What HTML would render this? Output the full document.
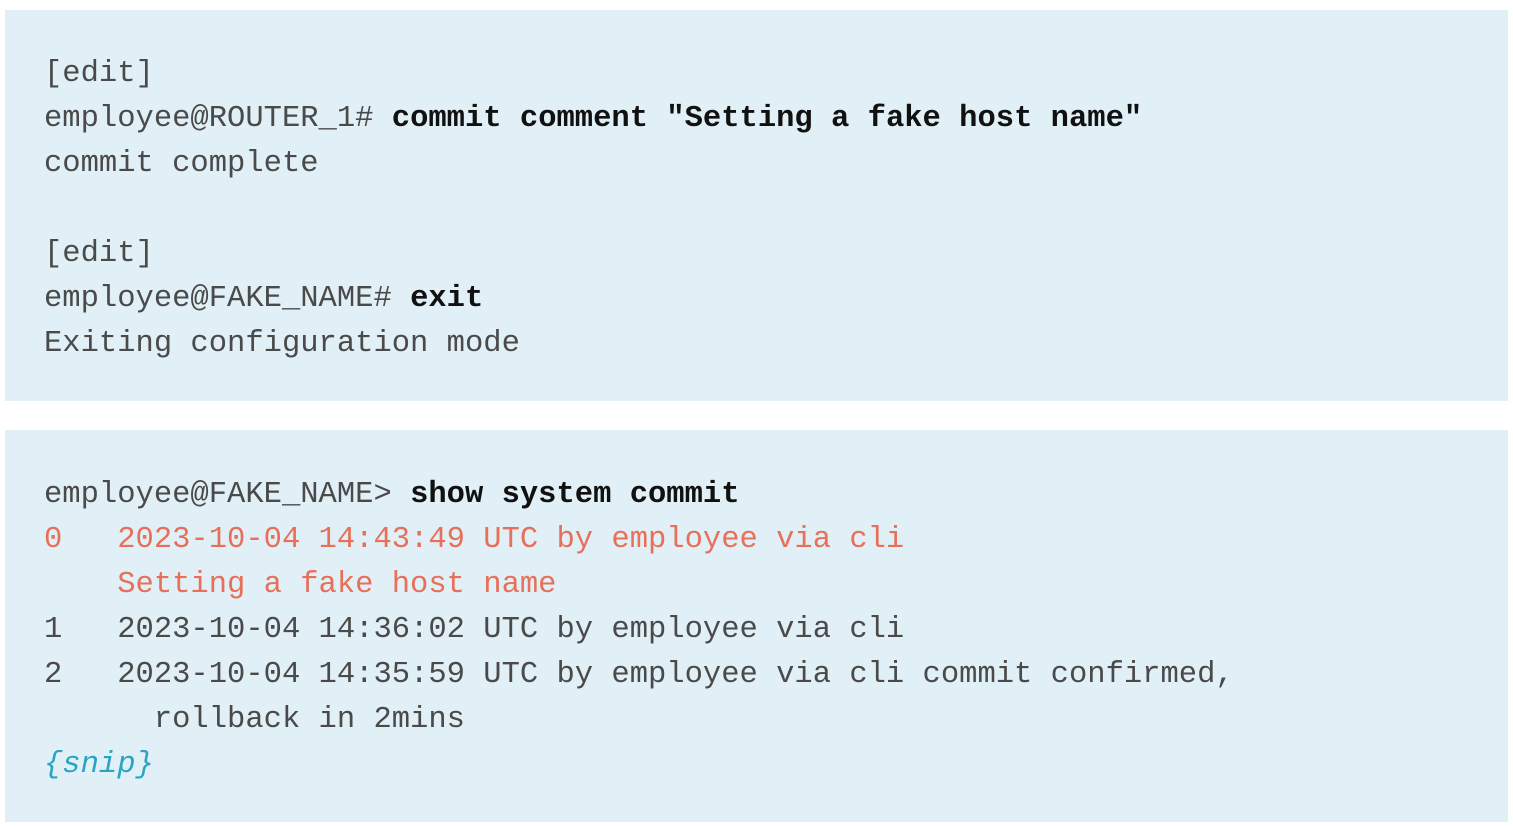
<!DOCTYPE html>
<html><head><meta charset="utf-8"><style>
html,body{margin:0;padding:0;background:#fff;width:1513px;height:828px;overflow:hidden}
.box{position:absolute;left:5px;width:1503px;background:#e1f0f6}
pre{position:absolute;left:44px;margin:0;font-family:"Liberation Mono",monospace;font-size:30.5px;line-height:45px;color:#4a4a4a;white-space:pre}
b{color:#111}
.r{color:#e8705a}
.c{color:#2aa4c4;font-style:italic}
</style></head><body>
<div class="box" style="top:10px;height:391px"></div>
<div class="box" style="top:430px;height:392px"></div>
<pre style="top:52px">[edit]
employee@ROUTER_1# <b>commit comment "Setting a fake host name"</b>
commit complete

[edit]
employee@FAKE_NAME# <b>exit</b>
Exiting configuration mode</pre>
<pre style="top:473px">employee@FAKE_NAME&gt; <b>show system commit</b>
<span class="r">0   2023-10-04 14:43:49 UTC by employee via cli</span>
<span class="r">    Setting a fake host name</span>
1   2023-10-04 14:36:02 UTC by employee via cli
2   2023-10-04 14:35:59 UTC by employee via cli commit confirmed,
      rollback in 2mins
<span class="c">{snip}</span></pre>
</body></html>
